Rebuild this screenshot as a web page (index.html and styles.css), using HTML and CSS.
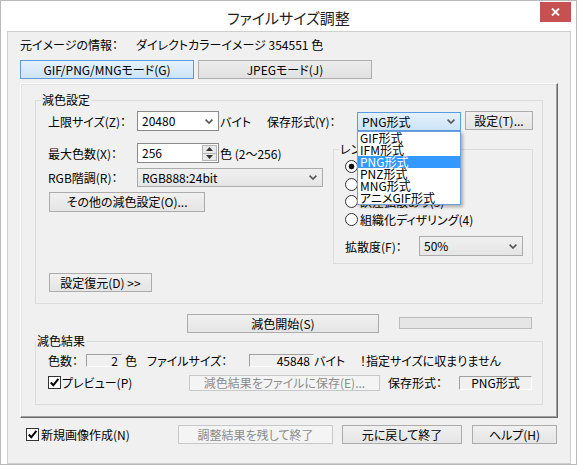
FILE: index.html
```html
<!DOCTYPE html>
<html lang="ja">
<head>
<meta charset="utf-8">
<title>ファイルサイズ調整</title>
<link rel="stylesheet" href="styles.css">
</head>
<body>
<div class="window">
  <div class="titlebar">
    <div></div>
    <div class="title">ファイルサイズ調整</div>
    <div class="close"><svg width="9" height="8" viewBox="0 0 9 8"><path d="M1 0.5 L8 7.5 M8 0.5 L1 7.5" stroke="#fff" stroke-width="1.8" fill="none"/></svg></div>
  </div>
  <div class="client">
    <div class="info"><span class="info-label">元イメージの情報：</span><span>ダイレクトカラーイメージ 354551 色</span></div>
    <div class="tabs">
      <div class="tab tab-active">GIF/PNG/MNGモード(G)</div>
      <div class="tab">JPEGモード(J)</div>
    </div>
    <div class="panel">
      <div class="group group-main">
        <div class="group-title">減色設定</div>
        <div class="row row-limit">
          <span class="lbl w89">上限サイズ(Z)：</span>
          <div class="combo combo-edit w82"><span class="combo-text">20480</span><svg class="chev" width="8" height="5" viewBox="0 0 8 5"><path d="M0.6 0.6 L4 4 L7.4 0.6" stroke="#555" stroke-width="1.6" fill="none"/></svg></div>
          <span class="lbl unit-byte">バイト</span>
          <span class="lbl w90">保存形式(Y)：</span>
          <div class="dropdown">
            <div class="combo combo-open"><span class="combo-text">PNG形式</span><svg class="chev" width="8" height="5" viewBox="0 0 8 5"><path d="M0.6 0.6 L4 4 L7.4 0.6" stroke="#555" stroke-width="1.6" fill="none"/></svg></div>
            <ul class="listbox">
              <li>GIF形式</li>
              <li>IFM形式</li>
              <li class="selected">PNG形式</li>
              <li>PNZ形式</li>
              <li>MNG形式</li>
              <li>アニメGIF形式</li>
            </ul>
          </div>
          <div class="btn btn-settings">設定(T)...</div>
        </div>
        <div class="split">
          <div class="left-col">
            <div class="row row-colors">
              <span class="lbl w89">最大色数(X)：</span>
              <div class="spin">
                <span class="spin-text">256</span>
                <div class="spin-btns">
                  <div class="spin-btn"><svg width="7" height="4" viewBox="0 0 7 4"><path d="M0 4 L3.5 0 L7 4 Z" fill="#333"/></svg></div>
                  <div class="spin-btn"><svg width="7" height="4" viewBox="0 0 7 4"><path d="M0 0 L3.5 4 L7 0 Z" fill="#333"/></svg></div>
                </div>
              </div>
              <span class="lbl range">色 (2〜256)</span>
            </div>
            <div class="row row-rgb">
              <span class="lbl w89">RGB階調(R)：</span>
              <div class="combo combo-list w186"><span class="combo-text">RGB888:24bit</span><svg class="chev" width="8" height="5" viewBox="0 0 8 5"><path d="M0.6 0.6 L4 4 L7.4 0.6" stroke="#555" stroke-width="1.6" fill="none"/></svg></div>
            </div>
            <div class="btn btn-other">その他の減色設定(O)...</div>
            <div class="btn btn-restore">設定復元(D) &gt;&gt;</div>
          </div>
          <div class="group group-render">
            <div class="group-title">レンダリング</div>
            <div class="radios">
              <div class="radio-row r17"><span class="radio checked"></span><span class="radio-text">ディザなし(1)</span></div>
              <div class="radio-row r18"><span class="radio"></span><span class="radio-text">誤差拡散(2)</span></div>
              <div class="radio-row r17"><span class="radio"></span><span class="radio-text">誤差拡散あり(3)</span></div>
              <div class="radio-row r18"><span class="radio"></span><span class="radio-text">組織化ディザリング(4)</span></div>
            </div>
            <div class="row row-diffuse">
              <span class="lbl w74">拡散度(F)：</span>
              <div class="combo combo-list w104"><span class="combo-text">50%</span><svg class="chev" width="8" height="5" viewBox="0 0 8 5"><path d="M0.6 0.6 L4 4 L7.4 0.6" stroke="#555" stroke-width="1.6" fill="none"/></svg></div>
            </div>
          </div>
        </div>
      </div>
      <div class="start-row">
        <div class="btn btn-start">減色開始(S)</div>
        <div class="progress"></div>
      </div>
      <div class="group group-result">
        <div class="group-title title-flush">減色結果</div>
        <div class="row row-count">
          <span class="lbl w38">色数：</span>
          <span class="static w36 right">2</span>
          <span class="lbl color-unit">色</span>
          <span class="lbl w102">ファイルサイズ：</span>
          <span class="static w65 right">45848</span>
          <span class="lbl w46">バイト</span>
          <span class="lbl">！指定サイズに収まりません</span>
        </div>
        <div class="row row-preview">
          <span class="check"><svg width="11" height="11" viewBox="0 0 11 11"><path d="M1.8 5.5 L4.3 8.3 L9.4 1.8" stroke="#000" stroke-width="2" fill="none"/></svg></span>
          <span class="lbl preview-lbl">プレビュー(P)</span>
          <div class="btn btn-disabled btn-save">減色結果をファイルに保存(E)...</div>
          <span class="lbl fmt-lbl">保存形式：</span>
          <span class="static w73 center">PNG形式</span>
        </div>
      </div>
    </div>
    <div class="footer">
      <span class="check"><svg width="11" height="11" viewBox="0 0 11 11"><path d="M1.8 5.5 L4.3 8.3 L9.4 1.8" stroke="#000" stroke-width="2" fill="none"/></svg></span>
      <span class="lbl new-lbl">新規画像作成(N)</span>
      <div class="btn btn-disabled btn-keep">調整結果を残して終了</div>
      <div class="btn btn-revert">元に戻して終了</div>
      <div class="btn btn-help">ヘルプ(H)</div>
    </div>
  </div>
</div>
</body>
</html>
```

FILE: styles.css
```css
html, body {
  margin: 0;
  padding: 0;
  background: #ffffff;
}

.window {
  width: 577px;
  height: 465px;
  box-sizing: border-box;
  border: 1px solid #bababa;
  background: #ffffff;
  font-family: "Noto Sans CJK JP", "Liberation Sans", sans-serif;
  font-size: 12px;
  color: #000;
  font-feature-settings: "palt";
  overflow: hidden;
}

/* title bar */
.titlebar {
  display: grid;
  grid-template-columns: 1fr auto 1fr;
  height: 30px;
}
.title {
  font-size: 15px;
  line-height: 22px;
  margin-top: 6px;
  color: #1e1e1e;
  white-space: nowrap;
}
.close {
  justify-self: end;
  margin: 1px 5px 0 0;
  width: 31px;
  height: 20px;
  background: #c75050;
  display: flex;
  align-items: center;
  justify-content: center;
}

/* client area */
.client {
  margin: 0 5px 0 6px;
  height: 433px;
  box-sizing: border-box;
  border: 1px solid #cfcfcf;
  background: #f0f0f0;
}
.info {
  display: flex;
  margin: 6px 0 0 12px;
  height: 14px;
  line-height: 14px;
  white-space: nowrap;
}
.info-label { width: 116px; }

.tabs {
  display: flex;
  gap: 4px;
  margin: 8px 0 0 12px;
}
.tab {
  width: 174px;
  height: 19px;
  box-sizing: border-box;
  border: 1px solid #adadad;
  background: linear-gradient(#ececec, #e1e1e1);
  text-align: center;
  line-height: 17px;
  white-space: nowrap;
}
.tab-active {
  border-color: #5b9bd9;
  background: linear-gradient(#e5f1fb, #cce4f7);
}

.panel {
  margin: 4px 0 0 12px;
  width: 538px;
  height: 335px;
  box-sizing: border-box;
  border: 1px solid;
  border-color: #ffffff #696969 #696969 #ffffff;
  box-shadow: inset -1px -1px 0 #a0a0a0, inset 1px 1px 0 #e3e3e3;
  background: #f0f0f0;
}

/* group boxes */
.group {
  box-sizing: border-box;
  border: 1px solid #dcdcdc;
}
.group-title {
  width: fit-content;
  margin: -8px 0 0 5px;
  padding: 0 1px;
  height: 14px;
  line-height: 14px;
  background: #f0f0f0;
  white-space: nowrap;
}
.title-flush { margin-left: 0; }

.group-main {
  margin: 16px 0 0 14px;
  width: 508px;
  height: 204px;
}

.row {
  display: flex;
  align-items: center;
  white-space: nowrap;
}
.lbl { flex: none; white-space: nowrap; }
.w38 { width: 38px; }
.w46 { width: 46px; }
.w74 { width: 74px; }
.w89 { width: 89px; }
.w90 { width: 90px; }
.w102 { width: 102px; }

.row-limit {
  margin: 4px 0 0 12px;
  height: 20px;
}
.unit-byte {
  margin-left: 1px;
  width: 47px;
}

/* combo boxes */
.combo {
  flex: none;
  box-sizing: border-box;
  display: flex;
  align-items: center;
  justify-content: space-between;
  padding: 0 4px 0 4px;
  border: 1px solid #acacac;
  background: linear-gradient(#f0f0f0, #e5e5e5);
  line-height: 16px;
}
.combo-text { white-space: nowrap; }
.chev { flex: none; margin-right: 1px; }
.w82 { width: 82px; }
.w104 { width: 104px; }
.w186 { width: 186px; }
.combo-edit {
  height: 20px;
  background: #ffffff;
  border-color: #8a8a8a;
}
.combo-open {
  width: 104px;
  height: 19px;
  border-color: #569de5;
  background: linear-gradient(#e5f1fb, #cce4f7);
}
.combo-list { height: 19px; }

.dropdown {
  position: relative;
  flex: none;
  width: 104px;
  height: 19px;
  align-self: flex-end;
}
.listbox {
  position: absolute;
  top: 100%;
  left: 0;
  z-index: 10;
  width: 104px;
  box-sizing: border-box;
  margin: 0;
  padding: 0;
  list-style: none;
  border: 1px solid #6e9fd6;
  background: #ffffff;
  box-shadow: 2px 2px 3px rgba(0, 0, 0, 0.28);
}
.listbox li {
  height: 12px;
  line-height: 12px;
  padding-left: 2px;
  white-space: nowrap;
}
.listbox li.selected {
  background: #3399ff;
  color: #ffffff;
}

/* buttons */
.btn {
  flex: none;
  box-sizing: border-box;
  border: 1px solid #acacac;
  background: linear-gradient(#f0f0f0, #e5e5e5);
  text-align: center;
  white-space: nowrap;
}
.btn-disabled {
  border-color: #c8c8c8;
  background: #f4f4f4;
  color: #8c8c8c;
}
.btn-settings {
  margin-left: 4px;
  width: 68px;
  height: 19px;
  line-height: 17px;
  align-self: flex-start;
}

.split { display: flex; }
.left-col {
  width: 297px;
  flex: none;
}
.row-colors {
  margin: 12px 0 0 12px;
  height: 20px;
}
.spin {
  flex: none;
  width: 82px;
  height: 20px;
  box-sizing: border-box;
  border: 1px solid #8a8a8a;
  background: #ffffff;
  display: flex;
}
.spin-text {
  flex: 1;
  padding-left: 4px;
  line-height: 18px;
}
.spin-btns {
  width: 15px;
  margin: 1px 1px 1px 0;
  display: flex;
  flex-direction: column;
  border: 1px solid #b5b5b5;
  box-sizing: border-box;
  background: #e9e9e9;
}
.spin-btn {
  flex: 1;
  display: flex;
  align-items: center;
  justify-content: center;
}
.spin-btn + .spin-btn { border-top: 1px solid #b5b5b5; }
.range { margin-left: 1px; }

.row-rgb {
  margin: 5px 0 0 12px;
  height: 19px;
}
.btn-other {
  margin: 5px 0 0 13px;
  width: 156px;
  height: 20px;
  line-height: 18px;
}
.btn-restore {
  margin: 61px 0 0 13px;
  width: 103px;
  height: 19px;
  line-height: 17px;
}

.group-render {
  margin-top: 18px;
  width: 200px;
  height: 115px;
}
.radios {
  margin: 2px 0 0 11px;
}
.radio-row {
  display: flex;
  align-items: center;
  white-space: nowrap;
}
.r17 { height: 17px; }
.r18 { height: 18px; }
.radio {
  flex: none;
  width: 13px;
  height: 13px;
  box-sizing: border-box;
  border: 1px solid #333333;
  border-radius: 50%;
  background: #ffffff;
}
.radio.checked {
  background: radial-gradient(circle, #111 0, #111 2.6px, #ffffff 3.2px);
}
.radio-text { margin-left: 2px; }
.row-diffuse {
  margin: 8px 0 0 11px;
  height: 20px;
}
.row-diffuse .combo { height: 20px; }

/* start row */
.start-row {
  display: flex;
  margin: 10px 0 0 166px;
}
.btn-start {
  width: 192px;
  height: 19px;
  line-height: 17px;
}
.progress {
  margin: 3px 0 0 20px;
  width: 133px;
  height: 12px;
  box-sizing: border-box;
  border: 1px solid #bcbcbc;
  background: #e6e6e6;
}

/* result group */
.group-result {
  margin: 8px 0 0 14px;
  width: 508px;
  height: 64px;
}
.row-count {
  margin: 5px 0 0 12px;
  height: 14px;
}
.static {
  flex: none;
  box-sizing: border-box;
  height: 13px;
  line-height: 11px;
  border: 1px solid;
  border-color: #a0a0a0 #ffffff #ffffff #a0a0a0;
  white-space: nowrap;
}
.right { text-align: right; padding-right: 3px; }
.center { text-align: center; height: 14px; line-height: 12px; }
.w36 { width: 36px; }
.w65 { width: 65px; }
.w73 { width: 73px; }
.color-unit {
  margin-left: 3px;
  width: 22px;
}

.row-preview {
  margin: 7px 0 0 12px;
  height: 17px;
}
.check {
  flex: none;
  width: 13px;
  height: 13px;
  box-sizing: border-box;
  border: 1px solid #333333;
  background: #ffffff;
  display: flex;
  align-items: center;
  justify-content: center;
}
.preview-lbl {
  margin-left: 1px;
  width: 127px;
}
.btn-save {
  width: 191px;
  height: 16px;
  line-height: 14px;
}
.fmt-lbl {
  margin-left: 8px;
  width: 71px;
}

/* footer */
.footer {
  display: flex;
  align-items: center;
  margin: 7px 0 0 18px;
  height: 19px;
}
.new-lbl {
  margin-left: 2px;
  width: 137px;
}
.footer .btn {
  height: 19px;
  line-height: 17px;
}
.btn-keep { width: 155px; }
.btn-revert {
  margin-left: 9px;
  width: 120px;
}
.btn-help {
  margin-left: 10px;
  width: 85px;
}
```
